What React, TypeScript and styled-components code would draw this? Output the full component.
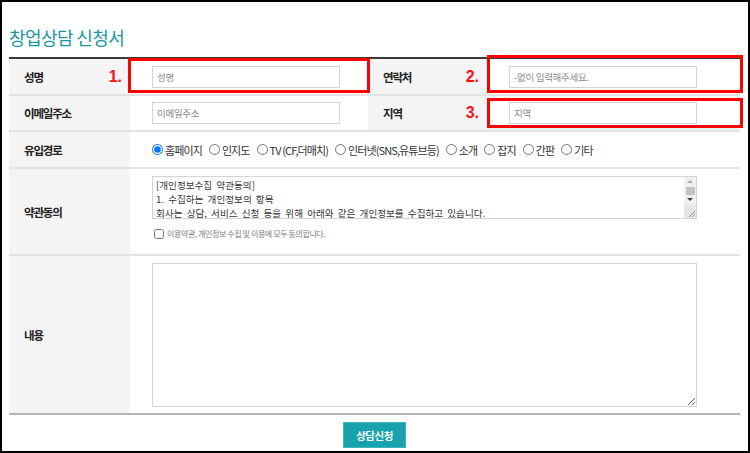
import React from 'react';
import styled, { createGlobalStyle } from 'styled-components';

const GlobalStyle = createGlobalStyle`
    html, body {
        margin: 0;
        padding: 0;
        background: #fff;
    }
    body {
        font-family: "Noto Sans CJK KR", "Noto Sans", sans-serif;
        color: #222;
    }
`;

const Page = styled.div`
    position: relative;
    box-sizing: border-box;
    width: 750px;
    height: 453px;
    border: 2px solid #000;
    padding: 24px 8px 0 7px;
`;

const Title = styled.h1`
    margin: 0 0 9px;
    font-size: 18px;
    line-height: 22px;
    font-weight: 400;
    letter-spacing: -0.6px;
    color: #1996a5;
`;

const Table = styled.div`
    width: 731px;
    border-top: 2px solid #3a3a3a;
    border-bottom: 2px solid #b4b4b4;
`;

const Row = styled.div<{ $cols: string; $height: number; $last?: boolean }>`
    display: grid;
    grid-template-columns: ${p => p.$cols};
    height: ${p => p.$height}px;
    border-bottom: ${p => (p.$last ? 'none' : '2px solid #e3e3e3')};
`;

const Label = styled.div`
    display: flex;
    align-items: center;
    justify-content: space-between;
    padding: 0 8px 0 15px;
    background: #f4f4f4;
    font-size: 11.5px;
    font-weight: 700;
    letter-spacing: -1.2px;
    color: #222;
`;

const Marker = styled.span`
    font-family: "Liberation Sans", Arial, sans-serif;
    font-size: 16px;
    font-weight: 700;
    letter-spacing: 0;
    color: #ff1010;
`;

const Cell = styled.div<{ $tint?: boolean; $indent?: number }>`
    display: flex;
    flex-direction: column;
    justify-content: center;
    padding-left: ${p => p.$indent ?? 22}px;
    box-shadow: ${p => (p.$tint ? 'inset 0 -2px 0 #e2f4f6' : 'none')};
`;

const TopCell = styled(Cell)`
    justify-content: flex-start;
    padding-top: 7px;
`;

const TextInput = styled.input`
    box-sizing: border-box;
    width: 188px;
    height: 22px;
    padding: 0 4px;
    border: 1px solid #d4d4d4;
    font-family: "Noto Sans CJK KR", sans-serif;
    font-size: 9.5px;
    letter-spacing: -0.3px;
    color: #333;
    outline: none;

    &::placeholder {
        color: #8a8a8a;
    }
`;

const RadioGroup = styled.div`
    display: flex;
    align-items: center;
    gap: 4px;
    font-size: 11px;
    letter-spacing: -0.9px;
    color: #333;
`;

const RadioItem = styled.label`
    display: flex;
    align-items: center;
    white-space: nowrap;

    input {
        width: 11px;
        height: 11px;
        margin: 0 2px 0 3px;
    }
`;

const TermsBox = styled.div`
    box-sizing: border-box;
    display: flex;
    width: 545px;
    height: 43px;
    border: 1px solid #d4d4d4;
`;

const TermsText = styled.textarea`
    flex: 1;
    margin: 0;
    padding: 1px 3px;
    border: none;
    font-family: "Noto Sans CJK KR", sans-serif;
    font-size: 9.6px;
    line-height: 14px;
    word-spacing: 2px;
    color: #333;
    resize: none;
    overflow: hidden;
    outline: none;
`;

const ScrollRail = styled.div`
    display: flex;
    flex-direction: column;
    width: 12px;
    background: #f1f1f1;
`;

const ScrollArrow = styled.div<{ $down?: boolean }>`
    display: flex;
    align-items: center;
    justify-content: center;
    height: 9px;

    &::before {
        content: "";
        border-left: 3px solid transparent;
        border-right: 3px solid transparent;
        ${p => (p.$down ? 'border-top: 3px solid #404040;' : 'border-bottom: 3px solid #a8a8a8;')}
    }
`;

const ScrollThumb = styled.div`
    height: 8px;
    margin: 1px 1px 0 2px;
    background: #c4c4c4;
`;

const ResizeCorner = styled.div`
    margin-top: auto;
    height: 13px;
    background: #e6e6e6;
    display: flex;
    align-items: flex-end;
    justify-content: flex-end;
`;

const Agree = styled.label`
    display: flex;
    align-items: center;
    margin-top: 9px;
    font-size: 8px;
    letter-spacing: -0.4px;
    color: #7a7a7a;

    input {
        width: 10px;
        height: 10px;
        margin: 0 3px 0 2px;
    }
`;

const Content = styled.textarea`
    box-sizing: border-box;
    width: 545px;
    height: 144px;
    margin: 0;
    border: 1px solid #d4d4d4;
    resize: vertical;
    outline: none;
`;

const Footer = styled.div`
    display: flex;
    justify-content: center;
    padding-top: 7px;
`;

const SubmitButton = styled.button`
    width: 63px;
    height: 26px;
    border: 1px solid #3cb6bf;
    background: #17a2ad;
    color: #fff;
    font-family: "Noto Sans CJK KR", sans-serif;
    font-size: 10.5px;
    font-weight: 700;
    letter-spacing: -0.5px;
    cursor: pointer;
`;

// red annotation frames drawn over the form
const Frame = styled.div<{ $x: number; $y: number; $w: number; $h: number }>`
    position: absolute;
    left: ${p => p.$x}px;
    top: ${p => p.$y}px;
    width: ${p => p.$w}px;
    height: ${p => p.$h}px;
    box-sizing: border-box;
    border: 3px solid #ff0000;
    pointer-events: none;
`;

const channels = ['홈페이지', '인지도', 'TV (CF,더매치)', '인터넷(SNS,유튜브등)', '소개', '잡지', '간판', '기타'];

const termsText = `[개인정보수집 약관동의]
1. 수집하는 개인정보의 항목
회사는 상담, 서비스 신청 등을 위해 아래와 같은 개인정보를 수집하고 있습니다.
- 수집항목 : 성명, 연락처, 이메일주소, 지역
- 개인정보 수집방법 : 홈페이지(상담신청)`;

export default function App() {
    const topCols = '121px 238px 119px 253px';
    const wideCols = '121px 610px';

    return (
        <>
            <GlobalStyle />
            <Page>
                <Title>창업상담 신청서</Title>
                <Table>
                    <Row $cols={topCols} $height={35}>
                        <Label>성명<Marker>1.</Marker></Label>
                        <Cell><TextInput placeholder="성명" /></Cell>
                        <Label>연락처<Marker>2.</Marker></Label>
                        <Cell><TextInput placeholder="-없이 입력해주세요." /></Cell>
                    </Row>
                    <Row $cols={topCols} $height={34}>
                        <Label>이메일주소</Label>
                        <Cell><TextInput placeholder="이메일주소" /></Cell>
                        <Label>지역<Marker>3.</Marker></Label>
                        <Cell $tint><TextInput placeholder="지역" /></Cell>
                    </Row>
                    <Row $cols={wideCols} $height={35}>
                        <Label>유입경로</Label>
                        <Cell $indent={19}>
                            <RadioGroup>
                                {channels.map((c, i) => (
                                    <RadioItem key={c}>
                                        <input type="radio" name="route" defaultChecked={i === 0} />
                                        {c}
                                    </RadioItem>
                                ))}
                            </RadioGroup>
                        </Cell>
                    </Row>
                    <Row $cols={wideCols} $height={85}>
                        <Label>약관동의</Label>
                        <TopCell>
                            <TermsBox>
                                <TermsText readOnly value={termsText} />
                                <ScrollRail>
                                    <ScrollArrow />
                                    <ScrollThumb />
                                    <ScrollArrow $down />
                                    <ResizeCorner>
                                        <svg width="8" height="8" viewBox="0 0 8 8">
                                            <path d="M1 7 L7 1 M4 7 L7 4" stroke="#8a8a8a" strokeWidth="0.9" fill="none" />
                                        </svg>
                                    </ResizeCorner>
                                </ScrollRail>
                            </TermsBox>
                            <Agree>
                                <input type="checkbox" />
                                이용약관, 개인정보 수집 및 이용에 모두 동의합니다.
                            </Agree>
                        </TopCell>
                    </Row>
                    <Row $cols={wideCols} $height={157} $last>
                        <Label>내용</Label>
                        <TopCell><Content /></TopCell>
                    </Row>
                </Table>
                <Footer>
                    <SubmitButton>상담신청</SubmitButton>
                </Footer>

                <Frame $x={126} $y={56} $w={242} $h={35} />
                <Frame $x={485} $y={53} $w={256} $h={38} />
                <Frame $x={485} $y={96} $w={256} $h={30} />
            </Page>
        </>
    );
}
